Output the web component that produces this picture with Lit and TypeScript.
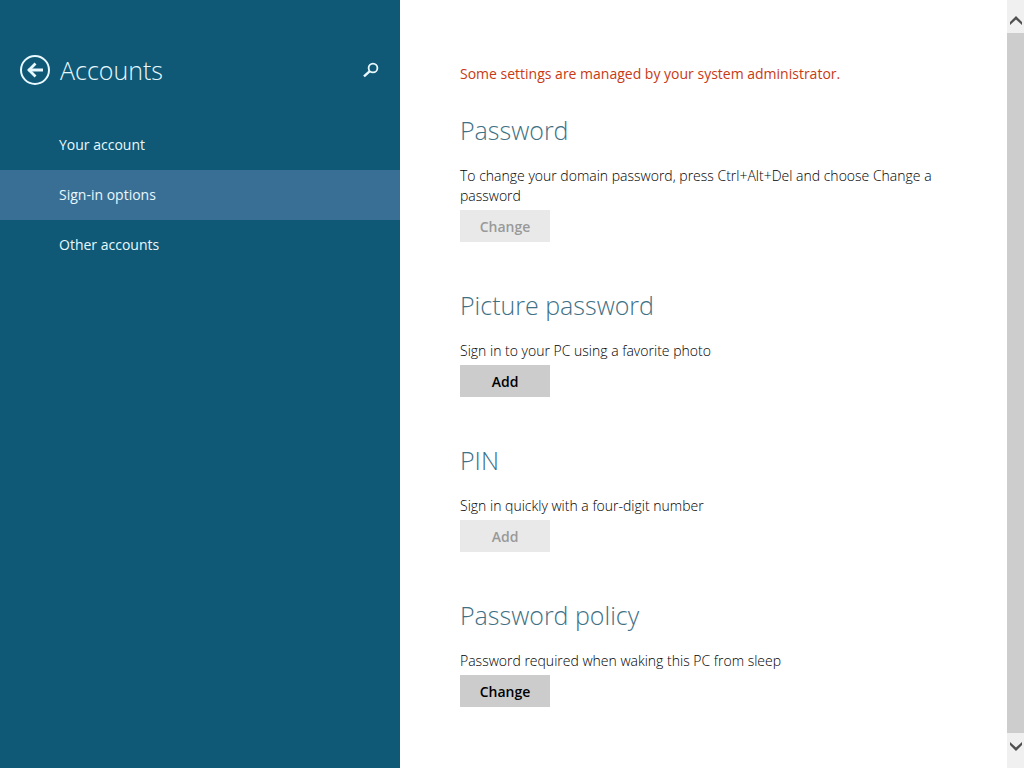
import { LitElement, html, css } from "lit";
import { customElement, property, state } from "lit/decorators.js";
import { classMap } from "lit/directives/class-map.js";

@customElement("settings-section")
class SettingsSection extends LitElement {
  @property() heading = "";
  @property() description = "";
  @property() action = "";
  @property({ type: Boolean }) locked = false;

  static styles = css`
    :host {
      display: block;
    }
    .heading {
      margin: 0 0 18px;
      font-size: 25px;
      line-height: 36px;
      font-weight: 300;
      color: #3f7185;
    }
    .description {
      margin: 0 0 4px;
      font-size: 14px;
      line-height: 20px;
      font-weight: 300;
      color: #000;
    }
    .action {
      display: block;
      min-width: 90px;
      height: 32px;
      padding: 2px 16px 0;
      border: 0;
      background: #ccc;
      color: #000;
      font: inherit;
      font-size: 14px;
      font-weight: 600;
    }
    .action:disabled {
      background: #e9e9e9;
      color: #999;
    }
  `;

  render() {
    return html`
      <section aria-labelledby="heading">
        <h2 class="heading" id="heading">${this.heading}</h2>
        <p class="description" id="description">${this.description}</p>
        <button class="action" aria-describedby="description" ?disabled=${this.locked}>${this.action}</button>
      </section>
    `;
  }
}

@customElement("app-root")
class AppRoot extends LitElement {
  @state() current = "Sign-in options";

  pages = ["Your account", "Sign-in options", "Other accounts"];

  sections = [
    {
      heading: "Password",
      description: "To change your domain password, press Ctrl+Alt+Del and choose Change a password",
      action: "Change",
      locked: true,
    },
    { heading: "Picture password", description: "Sign in to your PC using a favorite photo", action: "Add", locked: false },
    { heading: "PIN", description: "Sign in quickly with a four-digit number", action: "Add", locked: true },
    { heading: "Password policy", description: "Password required when waking this PC from sleep", action: "Change", locked: false },
  ];

  static styles = css`
    :host {
      display: grid;
      grid-template-columns: 400px minmax(0, 1fr) 17px;
      min-height: 100vh;
      background: #fff;
      font-family: "Open Sans", "Noto Sans", sans-serif;
      font-size: 14px;
      line-height: 20px;
    }
    .side {
      background: #0f5876;
      color: #e8f8ff;
    }
    .head {
      display: flex;
      align-items: center;
      gap: 10px;
      padding: 50px 21px 30px 20px;
      height: 40px;
    }
    .title {
      flex: 1;
      margin: 0;
      font-size: 25px;
      line-height: 36px;
      font-weight: 300;
    }
    .icon {
      display: block;
      padding: 0;
      border: 0;
      background: none;
      color: inherit;
    }
    .icon svg,
    .arrow svg {
      display: block;
    }
    .link {
      display: block;
      padding: 15px 59px;
      color: inherit;
      text-decoration: none;
    }
    .selected {
      background: #3a6f95;
    }
    .content {
      padding: 64px 44px 60px 60px;
    }
    .notice {
      margin: 0 0 28px;
      color: #c83a14;
    }
    .sections {
      display: grid;
      gap: 45px;
    }
    .scroll {
      display: flex;
      flex-direction: column;
      background: #f0f0f0;
    }
    .arrow {
      display: grid;
      place-items: center;
      height: 33px;
      padding: 8px 0 0;
      border: 0;
      background: none;
      color: #505050;
    }
    .down {
      height: 35px;
      padding: 0 0 8px;
    }
    .thumb {
      flex: 1;
      background: #cdcdcd;
    }
  `;

  render() {
    return html`
      <aside class="side">
        <header class="head">
          <button class="icon" aria-label="Back">
            <svg width="30" height="30" viewBox="0 0 30 30" fill="none" stroke="currentColor">
              <circle cx="15" cy="15" r="14" stroke-width="2" />
              <path d="M8.5 15H23" stroke-width="3" />
              <path d="M15.5 8.5L9 15l6.5 6.5" stroke-width="2.8" />
            </svg>
          </button>
          <h1 class="title">Accounts</h1>
          <button class="icon" aria-label="Search">
            <svg width="16" height="16" viewBox="0 0 16 16" fill="none" stroke="currentColor">
              <circle cx="10" cy="6" r="4.4" stroke-width="1.8" />
              <path d="M6.8 9.2L1 14.4" stroke-width="2.4" />
            </svg>
          </button>
        </header>
        <nav aria-label="Accounts">
          ${this.pages.map(
            (page) => html`<a
              href="#"
              class=${classMap({ link: true, selected: page === this.current })}
              aria-current=${page === this.current ? "page" : "false"}
              @click=${(e: Event) => {
                e.preventDefault();
                this.current = page;
              }}
              >${page}</a
            >`
          )}
        </nav>
      </aside>
      <main class="content">
        <p class="notice">Some settings are managed by your system administrator.</p>
        <div class="sections">
          ${this.sections.map(
            (s) => html`<settings-section
              .heading=${s.heading}
              .description=${s.description}
              .action=${s.action}
              .locked=${s.locked}
            ></settings-section>`
          )}
        </div>
      </main>
      <div class="scroll">
        <button class="arrow" aria-label="Scroll up">
          <svg width="12" height="9" viewBox="0 0 12 9" fill="currentColor">
            <path d="M6 0L12 6V9L6 3.6L0 9V6Z" />
          </svg>
        </button>
        <div class="thumb"></div>
        <button class="arrow down" aria-label="Scroll down">
          <svg width="12" height="9" viewBox="0 0 12 9" fill="currentColor">
            <path d="M6 9L12 3V0L6 5.4L0 0V3Z" />
          </svg>
        </button>
      </div>
    `;
  }
}
